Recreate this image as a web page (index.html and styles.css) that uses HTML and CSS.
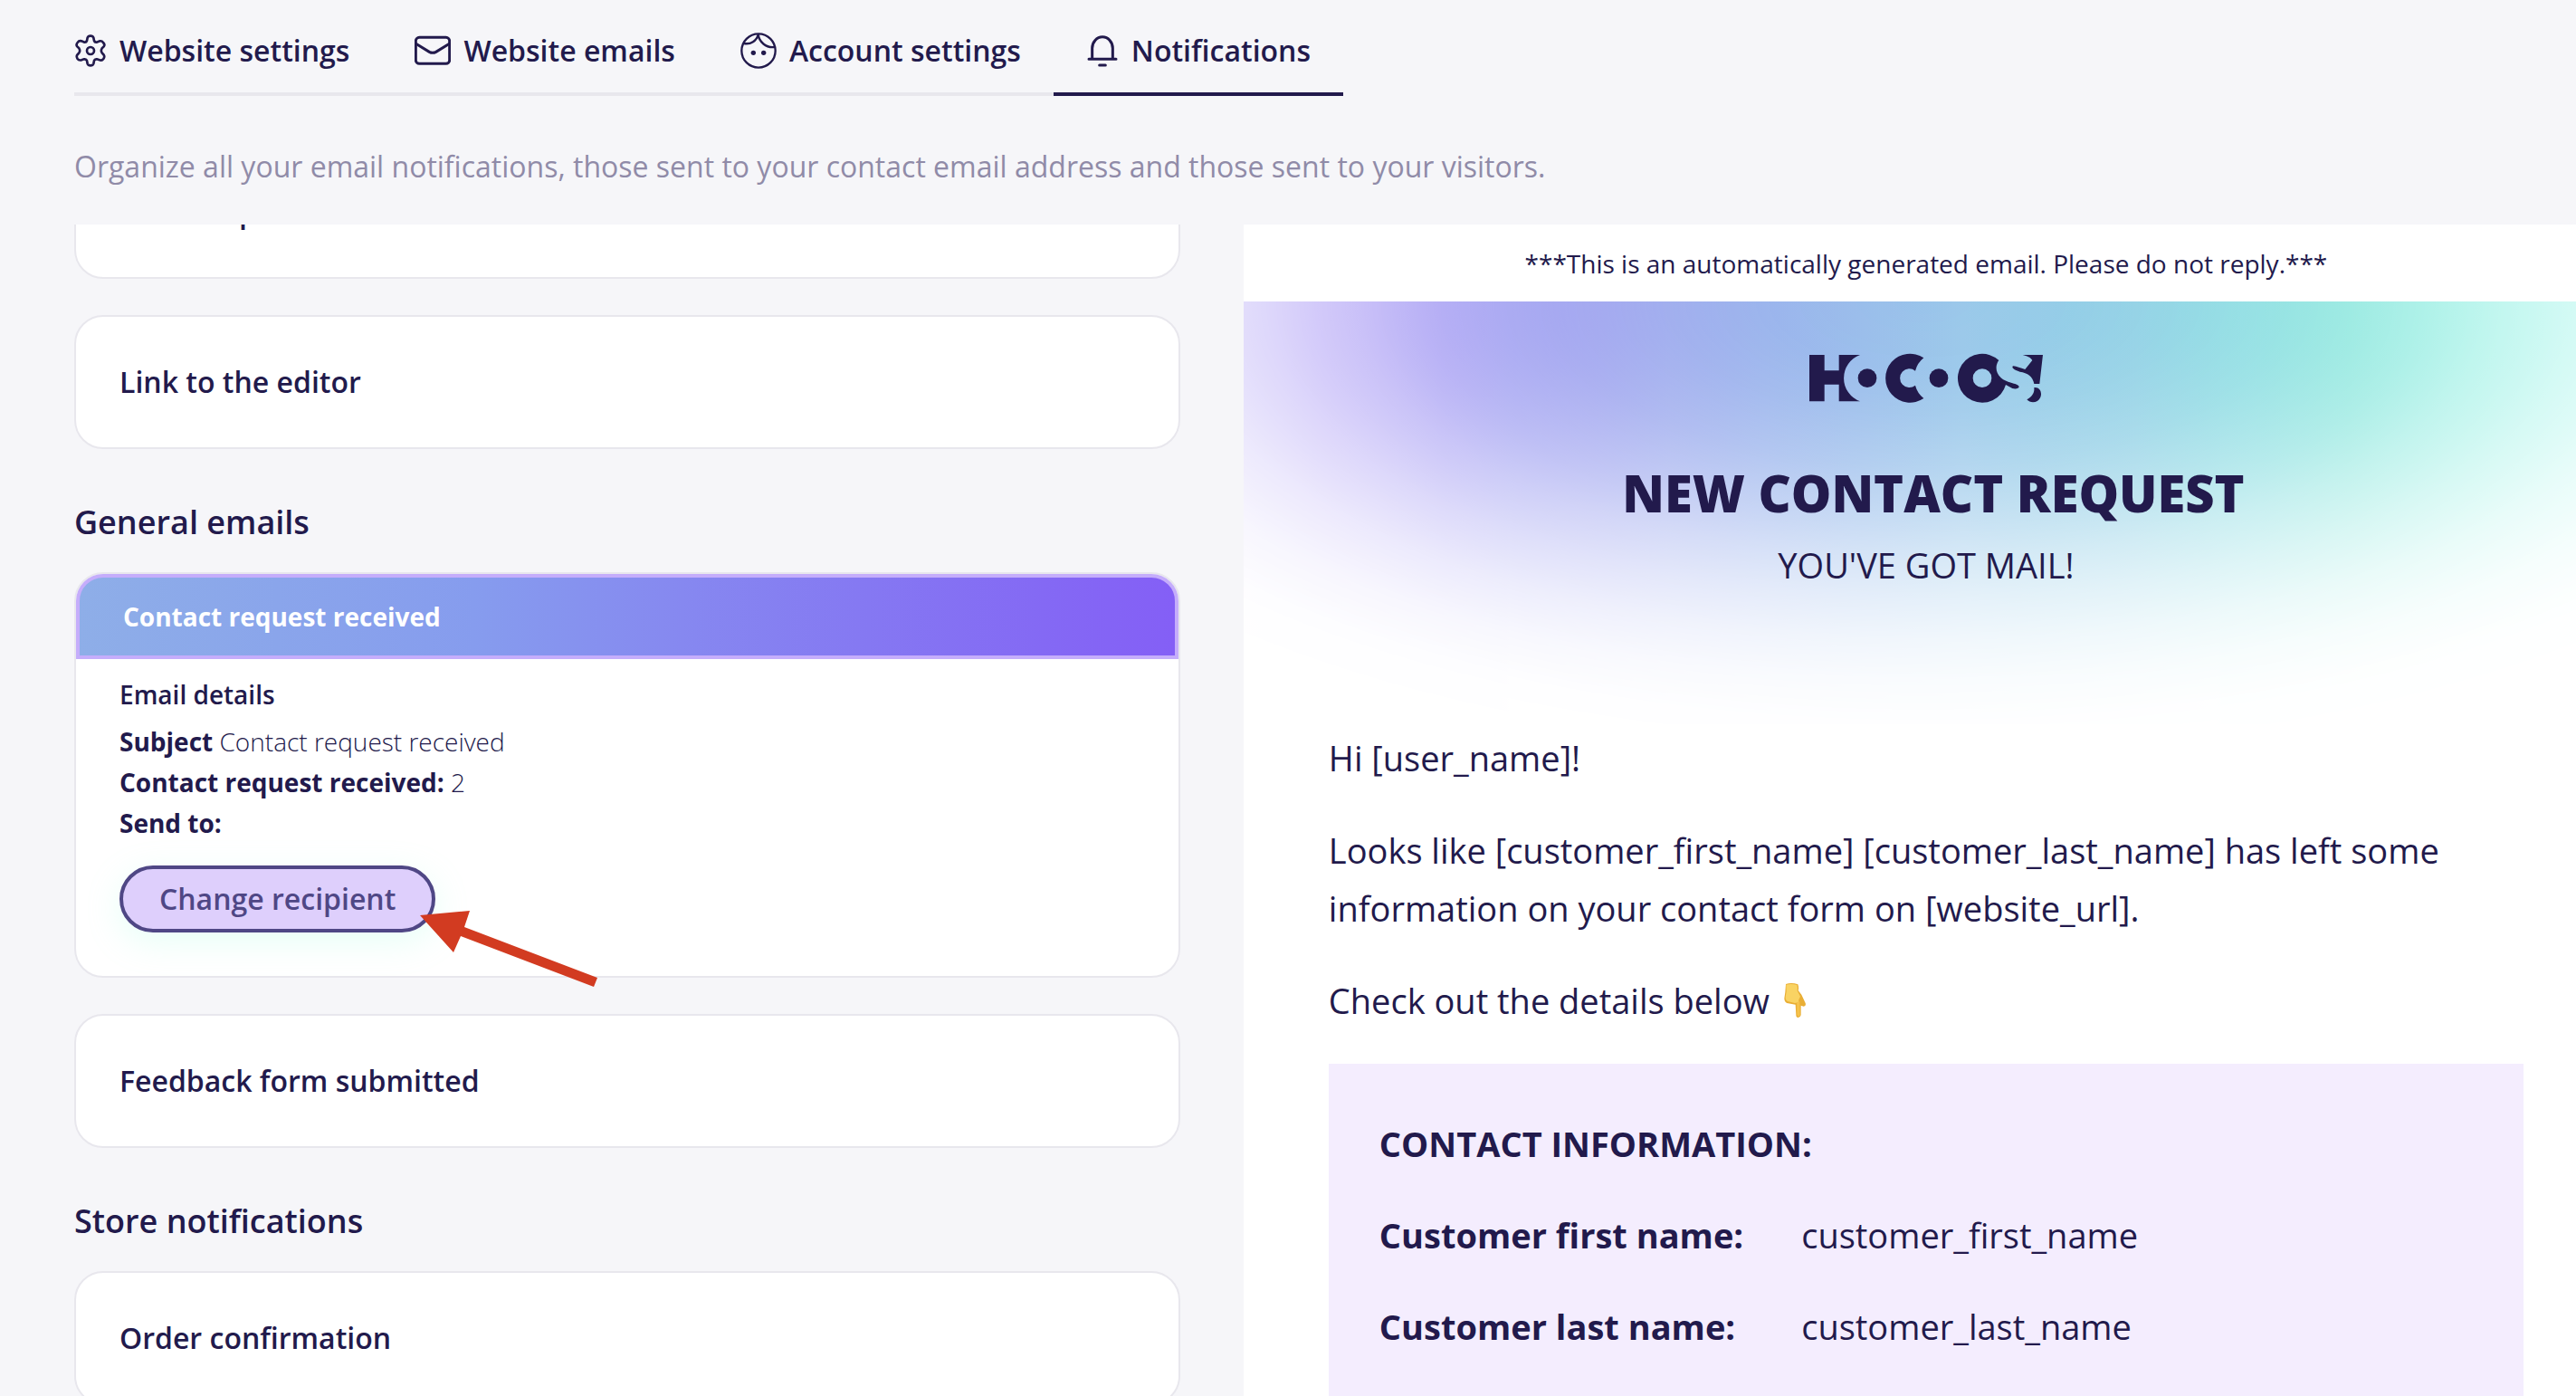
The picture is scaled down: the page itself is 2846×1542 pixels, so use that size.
FILE: index.html
```html
<!DOCTYPE html>
<html lang="en">
<head>
    <meta charset="UTF-8">
    <meta name="viewport" content="width=device-width, initial-scale=1.0">
    <title>Notifications</title>
    <link rel="stylesheet" href="styles.css">
</head>
<body>
    <div class="page">
        <nav class="tabs">
            <a href="#" class="tab">
                <svg class="icon" viewBox="18 36 108 108" fill="none" stroke="currentColor" stroke-width="8">
                    <path d="M62 47Q64 41 72 41Q80 41 82 47L84 57Q86 63 92 62L103 58Q110 57 114 63Q121 70 116 76L110 82Q105 90 110 97L116 104Q120 110 115 117Q110 124 102 121L93 118Q86 117 84 123L82 133Q80 139 72 139Q64 139 62 133L60 123Q58 117 51 118L42 121Q33 123 29 117Q24 109 28 104L34 97Q39 90 34 82L28 76Q23 70 29 63Q34 56 42 58L52 62Q58 63 60 57Z"/>
                    <circle cx="72" cy="90" r="12"/>
                </svg>
                Website settings
            </a>
            <a href="#" class="tab">
                <svg class="icon icon-wide" viewBox="1146 36 120 108" fill="none" stroke="currentColor" stroke-width="9" stroke-linecap="round">
                    <rect x="1150" y="46" width="112" height="87" rx="12"/>
                    <path d="M1153 68L1195 94Q1206 100 1217 94L1259 68"/>
                </svg>
                Website emails
            </a>
            <a href="#" class="tab">
                <svg class="icon icon-face" viewBox="24 32 120 120" fill="none" stroke="currentColor" stroke-width="7">
                    <circle cx="84" cy="92" r="56"/>
                    <path d="M36 68C58 72 78 60 83 38C86 62 108 84 138 80"/>
                    <circle cx="67" cy="99" r="8" fill="currentColor" stroke="none"/>
                    <circle cx="101" cy="99" r="8" fill="currentColor" stroke="none"/>
                </svg>
                Account settings
            </a>
            <a href="#" class="tab active">
                <svg class="icon" viewBox="1170 38 108 108" fill="none" stroke="currentColor" stroke-width="9" stroke-linecap="round">
                    <path d="M1190 119V84A34 38 0 0 1 1258 84V119M1179 120H1269M1214 140H1234"/>
                </svg>
                Notifications
            </a>
        </nav>
        <p class="intro">Organize all your email notifications, those sent to your contact email address and those sent to your visitors.</p>

        <div class="columns">
            <div class="list">
                <div class="card card-scrolled"><h3>Recover password</h3></div>
                <div class="card"><h3>Link to the editor</h3></div>

                <h2>General emails</h2>
                <div class="card card-open">
                    <h3 class="card-header">Contact request received</h3>
                    <div class="card-body">
                        <h4>Email details</h4>
                        <p><strong>Subject</strong> Contact request received</p>
                        <p><strong>Contact request received:</strong> 2</p>
                        <p><strong>Send to:</strong></p>
                        <div class="action">
                            <button type="button" class="recipient">Change recipient</button>
                            <svg class="arrow" viewBox="464 1005 196 85" fill="#d23b21">
                                <path d="M464 1011L519 1006L513 1024L660 1080L656 1090L509 1034L501 1052Z"/>
                            </svg>
                        </div>
                    </div>
                </div>
                <div class="card"><h3>Feedback form submitted</h3></div>

                <h2>Store notifications</h2>
                <div class="card"><h3>Order confirmation</h3></div>
            </div>

            <div class="preview">
                <p class="notice">***This is an automatically generated email. Please do not reply.***</p>
                <div class="hero">
                    <svg class="logo" viewBox="114 60 780 166" fill="currentColor" role="img" aria-label="Hocoos">
                        <path d="M117 66H167V118H215V66H285A82 82 0 0 0 285 220H215V164H167V220H117Z"/>
                        <circle cx="309" cy="143" r="31"/>
                        <path d="M496 76A81 81 0 1 0 496 210A82 82 0 0 1 468 167A31 31 0 1 1 468 119A82 82 0 0 1 496 76Z"/>
                        <circle cx="546" cy="143" r="31"/>
                        <path fill-rule="evenodd" d="M745 84A81 81 0 1 0 768 165L790 177C800 180 811 178 812 172C812 160 775 162 752 142C733 125 733 100 745 84ZM690 112A31 31 0 1 1 690 174A31 31 0 1 1 690 112Z"/>
                        <path d="M824 66H891L880 162H862C858 138 840 125 815 122C795 116 786 108 792 103C802 102 816 110 832 114L856 84C850 73 838 70 824 66Z"/>
                        <path d="M862 174C882 172 889 192 883 206C875 226 850 228 838 214C855 205 864 192 862 174Z"/>
                    </svg>
                    <h1>NEW CONTACT REQUEST</h1>
                    <p class="subtitle">YOU'VE GOT MAIL!</p>
                </div>
                <div class="message">
                    <p>Hi [user_name]!</p>
                    <p>Looks like [customer_first_name] [customer_last_name] has left some information on your contact form on [website_url].</p>
                    <p>Check out the details below
                        <svg class="hand" viewBox="0 0 72 114">
                            <path fill="#e9ae35" d="M6 3Q25-3 46 4Q50 14 47 24L58 38L71 66Q74 76 65 77L56 74V106Q54 114 47 114Q40 114 40 106L38 71L10 66Q1 62 1 50L4 30Z"/>
                            <path fill="#f9d363" d="M7 5Q25 0 43 6Q46 15 44 25L54 44Q48 52 48 64L36 66L12 60Q4 56 5 46L8 28Z"/>
                            <path fill="#f5c24c" d="M42 64L52 60L53 106Q51 111 47 110L43 104Z"/>
                        </svg>
                    </p>
                    <table class="details">
                        <caption>CONTACT INFORMATION:</caption>
                        <tr>
                            <th scope="row">Customer first name:</th>
                            <td>customer_first_name</td>
                        </tr>
                        <tr>
                            <th scope="row">Customer last name:</th>
                            <td>customer_last_name</td>
                        </tr>
                    </table>
                </div>
            </div>
        </div>
    </div>
</body>
</html>
```
FILE: styles.css
```css
* {
    box-sizing: border-box;
    margin: 0;
    padding: 0;
}

body {
    font-family: "Open Sans", "Noto Sans", sans-serif;
    font-size: 32px;
    color: #221a4c;
    background-color: #f6f6f9;
}

.page {
    display: flex;
    flex-direction: column;
    height: 100vh;
    padding-left: 82px;
    overflow: hidden;
}

.tabs {
    display: flex;
    align-self: flex-start;
}

.tab {
    display: flex;
    align-items: center;
    gap: 14px;
    height: 106px;
    padding: 9px 36px 0;
    border-bottom: 4px solid #e8e7ed;
    font-weight: 600;
    color: inherit;
    text-decoration: none;
}

.tab:first-child {
    padding-left: 0;
}

.tab.active {
    border-color: #221a4c;
}

.icon {
    width: 36px;
    height: 36px;
}

.icon-wide {
    width: 40px;
}

.icon-face {
    width: 40px;
    height: 40px;
}

.intro {
    height: 142px;
    padding-top: 56px;
    line-height: 44px;
    color: #908ba8;
}

.columns {
    display: grid;
    grid-template-columns: 83fr 100fr;
    gap: 70px;
    flex: 1;
    min-height: 0;
}

.list,
.preview {
    min-width: 0;
    overflow: hidden;
}

.card {
    margin-bottom: 40px;
    padding: 50px 48px;
    background: white;
    border: 2px solid #e8e7ed;
    border-radius: 32px;
}

.card-scrolled {
    margin-top: -88px;
}

h2 {
    margin: 56px 0 30px;
    font-size: 36px;
    line-height: 50px;
    font-weight: 600;
}

h3 {
    font-size: 32px;
    line-height: 44px;
    font-weight: 600;
}

.card-open {
    padding: 0;
}

.card-header {
    padding: 22px 48px;
    border: 4px solid #c5adfb;
    border-radius: 30px 30px 0 0;
    background: linear-gradient(90deg, #8eaee8, #869cee 36%, #8688f0 55%, #8469f4 88%, #845ff6);
    font-size: 28px;
    line-height: 42px;
    font-weight: 700;
    color: white;
}

.card-body {
    padding: 17px 48px 48px;
    font-size: 28px;
    font-weight: 300;
    line-height: 45px;
}

h4 {
    margin-bottom: 7px;
    font-size: 28px;
    font-weight: 600;
}

strong {
    font-weight: 700;
}

.action {
    position: relative;
    margin-top: 24px;
}

.recipient {
    display: block;
    height: 74px;
    padding: 0 40px 2px;
    border: 4px solid #4f4785;
    border-radius: 37px;
    background: #decffc;
    box-shadow: 0 10px 36px rgba(160, 255, 225, 0.25);
    font-family: inherit;
    font-size: 32px;
    font-weight: 600;
    color: #4f4785;
    cursor: pointer;
}

.arrow {
    position: absolute;
    left: 332px;
    top: 49px;
    width: 196px;
}

.preview {
    background: white;
}

.notice {
    padding: 23px 58px 22px 94px;
    font-size: 28px;
    line-height: 40px;
    text-align: center;
}

.hero {
    position: relative;
    height: 467px;
    padding: 57px 58px 0 94px;
    text-align: center;
    isolation: isolate;
}

.hero::before {
    content: "";
    position: absolute;
    inset: 0;
    z-index: -1;
    background: linear-gradient(90deg, #8069ef, #7c62ef 6%, #7a6eed 15%, #8080ec 20%, #8c92ec 26%, #95a4ec 32%, #98b2ec 39%, #9ac8ea 54%, #8ccfe4 67%, #7cd8de 75%, #68dfd3 83%, #62e8d5 92%, #5cecd9);
    mask-image: radial-gradient(ellipse 76% 108% at 51% 0, #000, rgba(0, 0, 0, 0.97) 15%, rgba(0, 0, 0, 0.88) 25%, rgba(0, 0, 0, 0.74) 36%, rgba(0, 0, 0, 0.53) 49%, rgba(0, 0, 0, 0.4) 56%, rgba(0, 0, 0, 0.26) 65%, rgba(0, 0, 0, 0.14) 74%, rgba(0, 0, 0, 0.06) 83%, rgba(0, 0, 0, 0.01) 92%, transparent);
}

.logo {
    display: block;
    width: 260px;
    margin: 0 auto;
}

h1 {
    margin-top: 59px;
    padding-left: 16px;
    font-size: 56px;
    line-height: 80px;
    font-weight: 800;
}

.subtitle {
    font-size: 38px;
    line-height: 80px;
}

.message {
    padding: 5px 58px 0 94px;
    font-size: 38px;
    line-height: 64px;
}

.message p {
    margin-bottom: 38px;
}

.hand {
    width: 24px;
    height: 38px;
    margin-left: 6px;
    vertical-align: -4px;
}

.details {
    display: block;
    padding: 56px;
    border-spacing: 0;
    background: #f4edfe;
    text-align: left;
}

.details caption {
    margin-bottom: 37px;
    font-weight: 700;
    text-align: left;
}

.details th {
    padding: 0 64px 37px 0;
    font-weight: 700;
}

.details td {
    padding-bottom: 37px;
}
```
